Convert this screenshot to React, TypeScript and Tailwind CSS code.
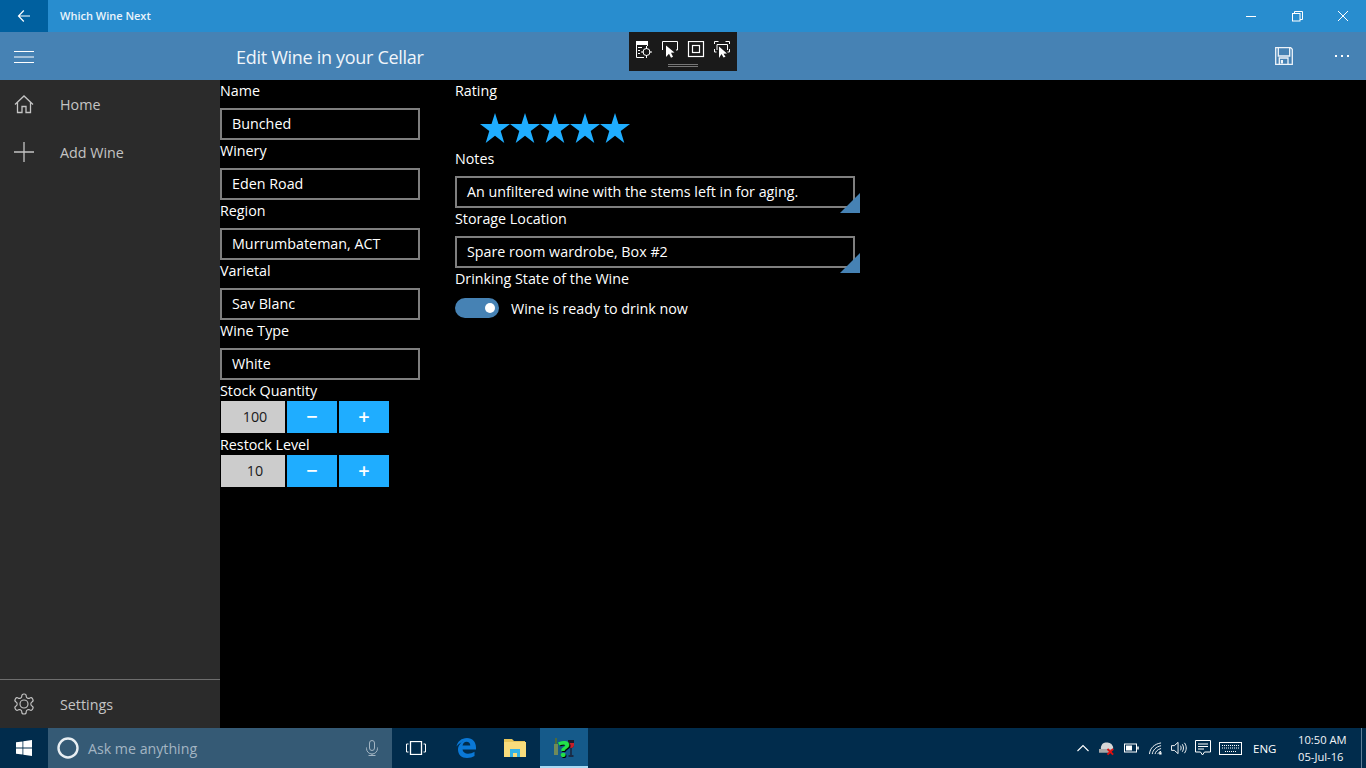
import React from "react";

const font = { fontFamily: '"Open Sans", "Noto Sans", sans-serif' };

function Field({ label, value }: { label: string; value: string }) {
  return (
    <div className="flex flex-col">
      <div className="h-[20px] text-[14.3px] leading-[22px] text-white">{label}</div>
      <div className="mt-[8px] flex h-[32px] w-[200px] items-center border-2 border-[#7f7f7f] bg-black pl-[10px] text-[14.3px] text-white">{value}</div>
    </div>
  );
}

function Stepper({ label, value }: { label: string; value: string }) {
  return (
    <div className="flex flex-col">
      <div className="h-[21px] text-[14.3px] leading-[22px] text-white">{label}</div>
      <div className="flex h-[32px] gap-[2px] pl-[1px]">
        <div className="flex w-[64px] items-center justify-center bg-[#cccccc] pl-[4px] text-[14.3px] text-[#1a1a1a]">{value}</div>
        <div className="flex w-[50px] items-center justify-center bg-[#1fadff] text-[20px] font-semibold text-white">−</div>
        <div className="flex w-[50px] items-center justify-center bg-[#1fadff] text-[20px] font-semibold text-white">+</div>
      </div>
    </div>
  );
}

function WideField({ label, value }: { label: string; value: string }) {
  return (
    <div className="flex flex-col">
      <div className="h-[20px] text-[14.3px] leading-[22px] text-white">{label}</div>
      <div className="relative mt-[8px] flex h-[32px] w-[400px] items-center border-2 border-[#7f7f7f] bg-black pl-[10px] text-[14.3px] text-white">
        {value}
        <svg className="absolute left-[383px] top-[15px]" width="20" height="20" viewBox="0 0 20 20">
          <polygon points="20,0 20,20 0,20" fill="#4682b4" />
        </svg>
      </div>
    </div>
  );
}

function NavItem({ label, icon }: { label: string; icon: React.ReactNode }) {
  return (
    <div className="flex h-[48px] items-center">
      <div className="flex w-[48px] justify-center">{icon}</div>
      <div className="ml-[12px] pt-[2px] text-[14.3px] text-[#c4c4c4]">{label}</div>
    </div>
  );
}

export default function App() {
  return (
    <div style={font} className="relative flex h-[768px] w-[1366px] flex-col overflow-hidden bg-black">
      {/* title bar */}
      <div className="flex h-[32px] items-center bg-[#288dcf]">
        <div className="flex h-[32px] w-[48px] items-center justify-center bg-[#00609f]">
          <svg width="16" height="16" viewBox="0 0 16 16" fill="none" stroke="#fff" strokeWidth="1.2">
            <path d="M2.500 8h11.500M7.800 2.500 2.500 8l5.300 5.500" />
          </svg>
        </div>
        <div className="ml-[12px] text-[11px] font-semibold text-[#eaf4fb]">Which Wine Next</div>
        <div className="ml-auto flex h-[32px]">
          <div className="flex w-[46px] items-center justify-center">
            <div className="h-px w-[10px] bg-white" />
          </div>
          <div className="flex w-[46px] items-center justify-center">
            <svg width="11" height="11" viewBox="0 0 11 11" fill="none" stroke="#fff" strokeWidth="1">
              <rect x="0.5" y="2.5" width="7.5" height="7.5" />
              <path d="M2.5 2.5V.5h8v8H8" />
            </svg>
          </div>
          <div className="flex w-[46px] items-center justify-center">
            <svg width="10" height="10" viewBox="0 0 10 10" fill="none" stroke="#fff" strokeWidth="1">
              <path d="M0 0l10 10M10 0 0 10" />
            </svg>
          </div>
        </div>
      </div>

      {/* command bar */}
      <div className="flex h-[48px] items-center bg-[#4682b4]">
        <div className="mt-[2px] flex w-[48px] justify-center">
          <svg width="20" height="14" viewBox="0 0 20 14" stroke="#fff" strokeWidth="1">
            <path d="M0 1.500h20M0 7h20M0 12.500h20" />
          </svg>
        </div>
        <div className="ml-[188px] mt-[3px] text-[18px] tracking-[-0.3px] text-[#f0f5fa]">Edit Wine in your Cellar</div>
        <div className="ml-auto flex items-center">
          <div className="flex w-[68px] justify-center">
            <svg width="18" height="18" viewBox="0 0 18 18" fill="none" stroke="#eef4f9" strokeWidth="1.300">
              <path d="M.7.7h15l1.600 1.600v15h-16.600z" />
              <path d="M3.300.7v8.300h11.400v-8.300M4.300 17.300v-6.300h8.700v6.300" />
              <rect x="5.800" y="13" width="2.200" height="3.500" fill="#eef4f9" stroke="none" />
            </svg>
          </div>
          <div className="flex w-[48px] justify-center gap-[4px]">
            <div className="h-[2px] w-[2px] bg-white" />
            <div className="h-[2px] w-[2px] bg-white" />
            <div className="h-[2px] w-[2px] bg-white" />
          </div>
        </div>
      </div>

      {/* floating debug toolbar */}
      <div className="absolute left-[629px] top-[32px] flex h-[39px] w-[108px] flex-col bg-[#1a1a1a]">
        <svg className="ml-[7px] mt-[9px]" width="96" height="18" viewBox="0 0 96 18" fill="none" stroke="#fff" strokeWidth="1">
          <path d="M.5 0h11v3.500H.5z" fill="#fff" />
          <path d="M.5 3v13.500H8M11.500 3v2" />
          <path d="M2 6.500h4M2 9.500h2M2 12.500h2" />
          <circle cx="10.500" cy="11" r="3.500" />
          <path d="M10.500 5v3M10.500 14v3M5 11h3M13 11h3" />
          <path d="M26.500 9V.5h15V9h-1.500" />
          <path d="M30 4.500l8.500 7-3.500.3 2 4-2 1-2-4L30 16z" fill="#fff" stroke="none" />
          <rect x="52.500" y=".5" width="15" height="15" strokeWidth="1.200" />
          <rect x="56.500" y="4.500" width="7" height="7" strokeWidth="1.200" />
          <path d="M78.500 3V.5h4M89.500.5h4V3M78.500 8v3h2M93.500 8v3h-2" />
          <path d="M81 9V3.500h10.500V9" />
          <path d="M83 5.500l8 7-3.500.3 2 3-2 .7-2-3.500L83 17z" fill="#fff" stroke="none" />
        </svg>
        <div className="ml-[39px] mt-[5px] h-[1px] w-[30px] bg-[#777777]" />
        <div className="ml-[39px] mt-[1px] h-[1px] w-[30px] bg-[#777777]" />
      </div>

      {/* body */}
      <div className="flex h-[648px]">
        <div className="flex w-[220px] flex-col bg-[#2b2b2b]">
          <NavItem
            label="Home"
            icon={
              <svg width="20" height="20" viewBox="0 0 20 20" fill="none" stroke="#c4c4c4" strokeWidth="1.300">
                <path d="M1 10.500 10 2l9 8.500M3.500 8.500v10h4.500v-6h4v6h4.500v-10" />
              </svg>
            }
          />
          <NavItem
            label="Add Wine"
            icon={
              <svg width="20" height="20" viewBox="0 0 20 20" stroke="#c4c4c4" strokeWidth="1.300">
                <path d="M0 10h20M10 0v20" />
              </svg>
            }
          />
          <div className="mt-auto h-px bg-[#6e6e6e]" />
          <NavItem
            label="Settings"
            icon={
              <svg width="24" height="24" viewBox="0 0 24 24" fill="none" stroke="#c4c4c4" strokeWidth="1.150">
                <path d="M12.220 2h-.44a2 2 0 0 0-2 2v.18a2 2 0 0 1-1 1.730l-.43.250a2 2 0 0 1-2 0l-.15-.080a2 2 0 0 0-2.730.730l-.22.380a2 2 0 0 0 .73 2.730l.15.100a2 2 0 0 1 1 1.720v.510a2 2 0 0 1-1 1.740l-.15.090a2 2 0 0 0-.73 2.730l.22.380a2 2 0 0 0 2.730.730l.15-.080a2 2 0 0 1 2 0l.43.250a2 2 0 0 1 1 1.730V20a2 2 0 0 0 2 2h.44a2 2 0 0 0 2-2v-.18a2 2 0 0 1 1-1.730l.43-.250a2 2 0 0 1 2 0l.15.080a2 2 0 0 0 2.730-.730l.22-.390a2 2 0 0 0-.73-2.730l-.15-.080a2 2 0 0 1-1-1.740v-.5a2 2 0 0 1 1-1.740l.15-.090a2 2 0 0 0 .73-2.730l-.22-.380a2 2 0 0 0-2.730-.730l-.15.080a2 2 0 0 1-2 0l-.43-.250a2 2 0 0 1-1-1.730V4a2 2 0 0 0-2-2z" />
                <circle cx="12" cy="12" r="4" />
              </svg>
            }
          />
        </div>

        <div className="flex w-[235px] flex-col">
          <Field label="Name" value="Bunched" />
          <Field label="Winery" value="Eden Road" />
          <Field label="Region" value="Murrumbateman, ACT" />
          <Field label="Varietal" value="Sav Blanc" />
          <Field label="Wine Type" value="White" />
          <Stepper label="Stock Quantity" value="100" />
          <div className="mt-[1px]">
            <Stepper label="Restock Level" value="10" />
          </div>
        </div>

        <div className="flex flex-col">
          <div className="h-[20px] text-[14.3px] leading-[22px] text-white">Rating</div>
          <div className="flex h-[48px] items-start pl-[25px] pt-[13px]">
            {[0, 1, 2, 3, 4].map((i) => (
              <svg key={i} width="30" height="30" viewBox="0 0 30 30">
                <polygon points="15,0 18.500,11 30,11 20.700,18 24.300,30 15,22.800 5.700,30 9.300,18 0,11 11.500,11" fill="#1fadff" />
              </svg>
            ))}
          </div>
          <WideField label="Notes" value="An unfiltered wine with the stems left in for aging." />
          <WideField label="Storage Location" value="Spare room wardrobe, Box #2" />
          <div className="h-[20px] text-[14.3px] leading-[22px] text-white">Drinking State of the Wine</div>
          <div className="mt-[10px] flex h-[20px] items-center">
            <div className="flex h-[20px] w-[44px] items-center justify-end rounded-full bg-[#4682b4] pr-[4px]">
              <div className="h-[10px] w-[10px] rounded-full bg-white" />
            </div>
            <div className="ml-[12px] pt-[2px] text-[14.3px] text-white">Wine is ready to drink now</div>
          </div>
        </div>
      </div>

      {/* taskbar */}
      <div className="flex h-[40px] items-center bg-[#012c4c] text-white">
        <div className="flex h-[40px] w-[48px] items-center justify-center">
          <svg width="16" height="16" viewBox="0 0 16 16" fill="#fff">
            <path d="M0 2.300 6.500 1.400v6.200H0zM7.300 1.300 16 0v7.600H7.300zM0 8.400h6.500v6.200L0 13.700zM7.300 8.400H16V16l-8.700-1.300z" />
          </svg>
        </div>
        <div className="flex h-[40px] w-[344px] items-center bg-[#355a75]">
          <svg className="ml-[9px]" width="22" height="22" viewBox="0 0 22 22" fill="none" stroke="#e8eef2" strokeWidth="2.400">
            <circle cx="11" cy="11" r="9.500" />
          </svg>
          <div className="ml-[9px] pt-[2px] text-[14.2px] text-[#a3b5c3]">Ask me anything</div>
          <svg className="ml-auto mr-[14px]" width="12" height="16" viewBox="0 0 12 16" fill="none" stroke="#a3b5c3" strokeWidth="1">
            <rect x="3.500" y=".5" width="5" height="10" rx="2.500" />
            <path d="M.5 7.500v1a5.500 5.500 0 0 0 11 0v-1M6 14v2M2.500 15.500h7" />
          </svg>
        </div>
        <div className="flex w-[48px] justify-center">
          <svg width="20" height="14" viewBox="0 0 20 14" fill="none" stroke="#fff" strokeWidth="1">
            <rect x="4.500" y=".5" width="11" height="13" strokeWidth="1.300" />
            <path d="M2.500 3H.5v8h2M17.500 3h2v8h-2" />
          </svg>
        </div>
        <div className="flex w-[52px] justify-center">
          <svg width="20" height="20" viewBox="0 0 20 20">
            <path d="M.5 8.500C1.500 3.500 5.500 0 11 0c5.500 0 9 4 9 9.500V11.500H6.500c.3 2.700 2.600 4.200 5.500 4.200 2.300 0 4.700-.7 6.500-2v4.300c-2 1.300-4.500 2-7.500 2-5.500 0-9-3.500-9-8.500 0-2 .6-3.700 1.800-5C4.500 5 6 3.700 7.500 3.500 4.500 4.500 2.500 6 .5 8.500zM6.500 7.500h7.800C14.300 5.200 12.800 3.800 10.500 3.800 8.500 3.800 7 5.200 6.500 7.500z" fill="#0a78d6" fillRule="evenodd" />
          </svg>
        </div>
        <div className="flex w-[48px] justify-center pr-[2px]">
          <svg width="22" height="18" viewBox="0 0 22 18">
            <path d="M0 0h8l2 2h11v3H0z" fill="#e8c65a" />
            <path d="M0 3h22v15H0z" fill="#f8dc7c" />
            <path d="M6 18v-8h10v8h-3v-4H9v4z" fill="#34b3e8" />
          </svg>
        </div>
        <div className="relative flex h-[40px] w-[48px] items-center justify-center bg-[#155a8a]">
          <svg width="22" height="22" viewBox="0 0 22 22">
            <rect x="1" y="7" width="4" height="11" fill="#6f8a5a" />
            <rect x="2" y="1" width="2" height="6" fill="#4d6a3c" />
            <path d="M15 3h6v5c0 2-1.500 3-3 3s-3-1-3-3z" fill="#1b1b2e" />
            <path d="M15 6h6v2c0 2-1.500 3-3 3s-3-1-3-3z" fill="#c8202a" />
            <path d="M18 11v7M15.500 19h5" stroke="#1b1b2e" strokeWidth="1.300" fill="none" />
          </svg>
          <span className="absolute left-[18px] top-[6px] text-[23px] font-extrabold leading-[28px] text-[#22e04a] [text-shadow:1px_1px_0_#000]">?</span>
          <div className="absolute bottom-0 left-0 h-[2px] w-[48px] bg-[#a9dbf5]" />
        </div>

        <div className="ml-auto flex h-[40px] items-center">
          <svg width="12" height="8" viewBox="0 0 12 8" fill="none" stroke="#fff" strokeWidth="1.100">
            <path d="M.5 7 6 1.500 11.500 7" />
          </svg>
          <svg className="ml-[10px]" width="16" height="15" viewBox="0 0 17 15">
            <path d="M2 6c1-4 3-5 6-5s6 1 7 5v3H2z" fill="#d8d8d8" />
            <rect x="0" y="8" width="13" height="4" fill="#a8a8a8" />
            <path d="M9 8l6 6M15 8l-6 6" stroke="#e01010" strokeWidth="2" />
          </svg>
          <svg className="ml-[9px]" width="15" height="10" viewBox="0 0 15 10" fill="none" stroke="#fff" strokeWidth="1">
            <rect x=".5" y="1" width="12" height="8" />
            <rect x="2" y="2.500" width="6" height="5" fill="#fff" stroke="none" />
            <path d="M14 3.500v3" strokeWidth="1.500" />
          </svg>
          <svg className="ml-[10px]" width="13" height="13" viewBox="0 0 14 13" fill="none" stroke="#fff" strokeWidth="1">
            <path d="M.5 12.500C1 6 6 1.500 13 .5M3.500 12.500C4 8.500 7.500 4.500 13 3.500M6.500 12.500C7 10 9 7.500 13 6.500M9.500 12.500c.3-1 1.500-2.500 3.500-3" />
            <rect x="11" y="10.500" width="2.500" height="2.500" fill="#fff" stroke="none" />
          </svg>
          <svg className="ml-[9px]" width="16" height="14" viewBox="0 0 17 14" fill="none" stroke="#fff" strokeWidth="1">
            <path d="M.5 4.500h3l4-3.500v12l-4-3.500h-3zM10 4.500c1 1.500 1 3.500 0 5M12 3c1.700 2.500 1.700 5.500 0 8M14.300 1.500c2.500 3.500 2.500 7.500 0 11" />
          </svg>
          <svg className="ml-[8px]" width="16" height="16" viewBox="0 0 16 16" fill="none" stroke="#fff" strokeWidth="1">
            <path d="M.5.5h15v11.500H9.500L7.500 15l-2-3H.5zM3 4h10M3 6.500h10M3 9h6" />
          </svg>
          <svg className="ml-[8px]" width="23" height="13" viewBox="0 0 23 13" fill="none" stroke="#fff" strokeWidth="1">
            <rect x=".5" y=".5" width="22" height="12" />
            <path d="M3 3.500h17M3 6h17M6 9.500h11" strokeDasharray="1 1" />
          </svg>
          <div className="ml-[11px] w-[23px] whitespace-nowrap pt-[1px] text-[11.5px] text-white">ENG</div>
          <div className="ml-[22px] flex w-[50px] flex-col items-start whitespace-nowrap text-[11.2px] leading-[17px] text-[#f2f5f8]">
            <span>10:50 AM</span>
            <span>05-Jul-16</span>
          </div>
          <div className="ml-[13px] h-[40px] w-[1px] bg-[#5f7f98]" />
          <div className="w-[4px]" />
        </div>
      </div>
    </div>
  );
}
